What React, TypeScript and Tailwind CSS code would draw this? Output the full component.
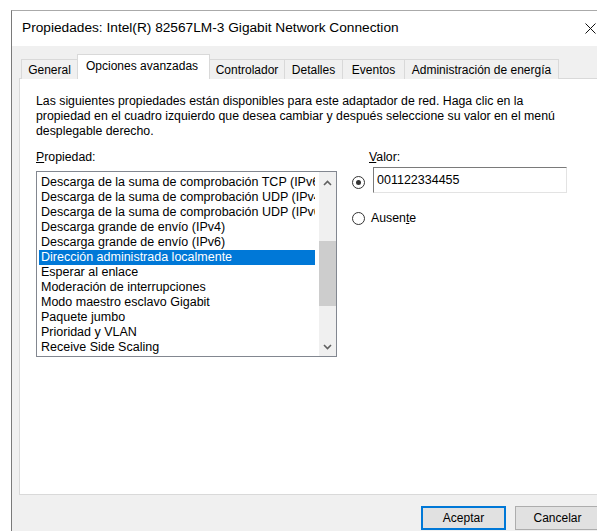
import { ReactNode } from "react";

const items = [
  "Descarga de la suma de comprobación TCP (IPv6)",
  "Descarga de la suma de comprobación UDP (IPv4)",
  "Descarga de la suma de comprobación UDP (IPv6)",
  "Descarga grande de envío (IPv4)",
  "Descarga grande de envío (IPv6)",
  "Dirección administrada localmente",
  "Esperar al enlace",
  "Moderación de interrupciones",
  "Modo maestro esclavo Gigabit",
  "Paquete jumbo",
  "Prioridad y VLAN",
  "Receive Side Scaling",
];

const selectedItem = 5;

function Tab({ label, width, active, first }: { label: string; width: string; active?: boolean; first?: boolean }) {
  if (active) {
    return (
      <div
        className={`${width} relative z-10 h-[25px] shrink-0 border-x border-t border-[#d9d9d9] bg-white pl-[8px] pt-[4px] leading-[15px]`}
      >
        {label}
      </div>
    );
  }
  return (
    <div
      className={`${width} h-[20px] shrink-0 border-t border-[#d9d9d9] bg-[#f0f0f0] pt-[3px] text-center leading-[15px] ${
        first ? "border-l" : "border-r"
      }`}
    >
      {label}
    </div>
  );
}

function Radio({ checked }: { checked?: boolean }) {
  return (
    <div className="flex h-[13px] w-[13px] shrink-0 items-center justify-center rounded-full border border-[#333] bg-white">
      {checked && <div className="h-[5px] w-[5px] rounded-full bg-[#333]" />}
    </div>
  );
}

function Button({ children, primary }: { children: ReactNode; primary?: boolean }) {
  return (
    <div
      className={`flex h-[24px] w-[85px] items-center justify-center bg-[#e1e1e1] ${
        primary ? "border-2 border-[#0078d7]" : "border border-[#adadad]"
      }`}
    >
      {children}
    </div>
  );
}

function Chevron({ up }: { up?: boolean }) {
  return (
    <svg width="9" height="6" viewBox="0 0 9 6" className="text-[#606060]">
      <path
        d={up ? "M1 5 L4.5 1.5 L8 5" : "M1 1 L4.5 4.5 L8 1"}
        fill="none"
        stroke="currentColor"
        strokeWidth="1.6"
      />
    </svg>
  );
}

export default function App() {
  return (
    <div
      className="h-[531px] w-[597px] overflow-hidden bg-white text-[12px] text-black"
      style={{ fontFamily: '"Liberation Sans", Arial, sans-serif' }}
    >
      <div className="ml-[11px] mt-[10px] w-[602px] border-l border-t border-l-[#7a7a7a] border-t-[#aaaaaa]">
        {/* title bar */}
        <div className="flex h-[35px] items-center bg-white">
          <div className="flex-1 pl-[10px] text-[13.7px]">
            Propiedades: Intel(R) 82567LM-3 Gigabit Network Connection
          </div>
          <div className="flex h-[35px] w-[46px] items-center justify-center">
            <svg width="11" height="11" viewBox="0 0 11 11">
              <path d="M0.5 0.5 L10.5 10.5 M10.5 0.5 L0.5 10.5" stroke="#111" strokeWidth="1" />
            </svg>
          </div>
        </div>

        {/* body */}
        <div className="h-[500px] bg-[#f0f0f0] pl-[7px] pr-[13px] pt-[8px]">
          <div className="relative z-10 mb-[-1px] ml-[2px] flex items-end">
            <Tab label="General" width="w-[56px]" first />
            <Tab label="Opciones avanzadas" width="w-[133px]" active />
            <Tab label="Controlador" width="w-[75px]" />
            <Tab label="Detalles" width="w-[58px]" />
            <Tab label="Eventos" width="w-[62px]" />
            <Tab label="Administración de energía" width="w-[154px]" />
          </div>

          <div className="h-[417px] border border-[#d9d9d9] bg-white pl-[16px] pt-[15px] text-[12.3px]">
            <p className="leading-[15px]">
              Las siguientes propiedades están disponibles para este adaptador de red. Haga clic en la
              <br />
              propiedad en el cuadro izquierdo que desea cambiar y después seleccione su valor en el menú
              <br />
              desplegable derecho.
            </p>

            <div className="mt-[11px] flex">
              <div className="w-[301px]">
                <div className="leading-[15px]">
                  <span className="underline">P</span>ropiedad:
                </div>
                <div className="mt-[6px] flex h-[186px] border border-[#828790] bg-white">
                  <div className="w-[278px] overflow-hidden pl-[2px] pt-[3px]">
                    {items.map((item, i) => (
                      <div
                        key={item}
                        className={`h-[15px] overflow-hidden whitespace-nowrap pl-[2px] text-[12.5px] leading-[15px] ${
                          i === selectedItem ? "bg-[#0078d7] text-white" : ""
                        }`}
                      >
                        {item}
                      </div>
                    ))}
                  </div>
                  <div className="ml-auto flex w-[17px] flex-col bg-[#f0f0f0]">
                    <div className="flex h-[17px] items-center justify-center pt-[4px]">
                      <Chevron up />
                    </div>
                    <div className="flex-1 pt-[52px]">
                      <div className="h-[65px] bg-[#cdcdcd]" />
                    </div>
                    <div className="flex h-[17px] items-center justify-center pb-[2px]">
                      <Chevron />
                    </div>
                  </div>
                </div>
              </div>

              <div className="ml-[15px] flex-1">
                <div className="pl-[17px] leading-[15px]">
                  <span className="underline">V</span>alor:
                </div>
                <div className="mt-[2px] flex items-center">
                  <div className="mt-[4px]">
                    <Radio checked />
                  </div>
                  <div className="ml-[8px] flex h-[26px] w-[194px] items-center border border-b-[#e3e3e3] border-l-[#7a7a7a] border-r-[#e3e3e3] border-t-[#7a7a7a] bg-white pl-[3px] text-[12.5px]">
                    001122334455
                  </div>
                </div>
                <div className="mt-[18px] flex items-center">
                  <Radio />
                  <span className="ml-[6px] leading-[15px]">
                    Ausen<span className="underline">t</span>e
                  </span>
                </div>
              </div>
            </div>
          </div>

          <div className="mt-[11px] flex justify-end gap-[9px]">
            <Button primary>Aceptar</Button>
            <Button>Cancelar</Button>
          </div>
        </div>
      </div>
    </div>
  );
}
